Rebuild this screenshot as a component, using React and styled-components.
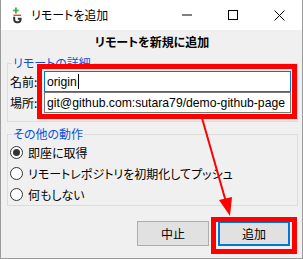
import React from 'react';
import styled, { createGlobalStyle } from 'styled-components';

const Global = createGlobalStyle`
  html, body { margin: 0; padding: 0; background: #fff; }
  body { font-family: "Noto Sans CJK JP", "Noto Sans", sans-serif; }
`;

const Window = styled.div`
  position: relative;
  width: 303px;
  height: 259px;
  box-sizing: border-box;
  border: 1px solid #9b9b9b;
  border-top: none;
  background: #f0f0f0;
  display: flex;
  flex-direction: column;
  font-family: "Noto Sans CJK JP", "Noto Sans", sans-serif;
  font-size: 12px;
  color: #000;
  font-feature-settings: "palt";
  overflow: hidden;
`;

const TitleBar = styled.div`
  height: 30px;
  flex: none;
  background: #fff;
  display: flex;
  align-items: center;
  padding-left: 11px;
`;

const AppIcon = styled.svg`
  width: 11px;
  height: 17px;
  margin-right: 8px;
  flex: none;
`;

const TitleText = styled.span`
  flex: 1;
  line-height: 16px;
`;

const Ctrl = styled.div`
  width: 46px;
  height: 30px;
  display: flex;
  align-items: center;
  justify-content: center;
`;

const Header = styled.div`
  height: 22px;
  flex: none;
  display: flex;
  align-items: center;
  justify-content: center;
  font-weight: bold;
  padding-left: 1px;
`;

const Group = styled.fieldset`
  margin: ${p => p.$mt}px 4px 0 6px;
  padding: ${p => p.$pt}px 6px ${p => p.$pb}px 2px;
  border: 1px solid #dcdcdc;
  min-width: 0;
`;

const Legend = styled.legend`
  padding: 0 1px;
  margin-left: 2px;
  color: #0a50dc;
  line-height: 14px;
`;

const FieldRow = styled.div`
  display: flex;
  align-items: center;
`;

const FieldLabel = styled.span`
  width: 34px;
  flex: none;
  line-height: 16px;
`;

const TextBox = styled.div`
  flex: 1;
  min-width: 0;
  height: 21px;
  box-sizing: border-box;
  border: 1px solid ${p => (p.$focus ? '#0078d7' : '#7a7a7a')};
  background: #fff;
  padding: 0 1px 0 2px;
  display: flex;
  align-items: center;
  font-family: "Liberation Sans", Arial, sans-serif;
  font-size: 12.2px;
  font-feature-settings: normal;
  white-space: nowrap;
  overflow: hidden;
`;

const Caret = styled.span`
  display: inline-block;
  width: 1px;
  height: 15px;
  background: #000;
  margin-left: 1px;
`;

const RadioRow = styled.div`
  height: 21px;
  display: flex;
  align-items: center;
`;

const RadioDot = styled.span`
  width: 13px;
  height: 13px;
  box-sizing: border-box;
  border-radius: 50%;
  border: 1px solid #333;
  background: #fff;
  margin-right: 5px;
  flex: none;
  display: flex;
  align-items: center;
  justify-content: center;
  &::after {
    content: '';
    width: 7px;
    height: 7px;
    border-radius: 50%;
    background: ${p => (p.$checked ? '#333' : 'transparent')};
  }
`;

const ButtonBar = styled.div`
  margin-top: 15px;
  display: flex;
  justify-content: flex-end;
  gap: 9px;
  padding-right: 12px;
`;

const Button = styled.button`
  width: 72px;
  height: 25px;
  box-sizing: border-box;
  background: #e1e1e1;
  border: ${p => (p.$default ? '2px solid #0078d7' : '1px solid #adadad')};
  font-family: "Noto Sans CJK JP", sans-serif;
  font-size: 12px;
  font-feature-settings: "palt";
  color: #000;
  padding: 0;
  margin: 0;
`;

const Highlight = styled.div`
  position: absolute;
  box-sizing: border-box;
  border: 5px solid #ff0000;
  pointer-events: none;
`;

const ArrowLayer = styled.svg`
  position: absolute;
  left: 0;
  top: 0;
  width: 301px;
  height: 258px;
  pointer-events: none;
`;

export default function App() {
  return (
    <>
      <Global />
      <Window>
        <TitleBar>
          <AppIcon viewBox="0 0 11 17">
            <rect x="3" y="0.5" width="1.8" height="6" fill="#3cb44b" />
            <rect x="1.2" y="2.6" width="5.4" height="1.8" fill="#3cb44b" />
            <rect x="1.5" y="7.6" width="7.5" height="1.3" fill="#e0302a" />
            <path d="M2.2 9.8 V12.6 A2.6 2.6 0 0 0 4.8 15.2 H6 A2.6 2.6 0 0 0 8.6 12.6 V11.8 H5.8" fill="none" stroke="#333" strokeWidth="2" />
          </AppIcon>
          <TitleText>リモートを追加</TitleText>
          <Ctrl>
            <svg width="10" height="10" viewBox="0 0 10 10"><rect x="0" y="4.5" width="10" height="1" fill="#000" /></svg>
          </Ctrl>
          <Ctrl>
            <svg width="10" height="10" viewBox="0 0 10 10"><rect x="0.5" y="0.5" width="9" height="9" fill="none" stroke="#000" strokeWidth="1" /></svg>
          </Ctrl>
          <Ctrl>
            <svg width="11" height="11" viewBox="0 0 11 11"><path d="M0.5 0.5 L10.5 10.5 M10.5 0.5 L0.5 10.5" stroke="#000" strokeWidth="1" /></svg>
          </Ctrl>
        </TitleBar>
        <Header>リモートを新規に追加</Header>
        <Group $mt={4} $pt={1} $pb={8}>
          <Legend>リモートの詳細</Legend>
          <FieldRow>
            <FieldLabel>名前:</FieldLabel>
            <TextBox $focus>origin<Caret /></TextBox>
          </FieldRow>
          <FieldRow>
            <FieldLabel>場所:</FieldLabel>
            <TextBox>git@github.com:sutara79/demo-github-page</TextBox>
          </FieldRow>
        </Group>
        <Group $mt={5} $pt={1} $pb={0}>
          <Legend>その他の動作</Legend>
          <RadioRow><RadioDot $checked />即座に取得</RadioRow>
          <RadioRow><RadioDot />リモートレポジトリを初期化してプッシュ</RadioRow>
          <RadioRow><RadioDot />何もしない</RadioRow>
        </Group>
        <ButtonBar>
          <Button>中止</Button>
          <Button $default>追加</Button>
        </ButtonBar>
        <Highlight style={{ left: 36, top: 64, width: 260, height: 55 }} />
        <Highlight style={{ left: 210, top: 217, width: 86, height: 37 }} />
        <ArrowLayer viewBox="0 0 301 258">
          <line x1="201" y1="118" x2="225" y2="202" stroke="#ff0000" strokeWidth="2" />
          <polygon points="229,216 218,200 231,197" fill="#ff0000" />
        </ArrowLayer>
      </Window>
    </>
  );
}
